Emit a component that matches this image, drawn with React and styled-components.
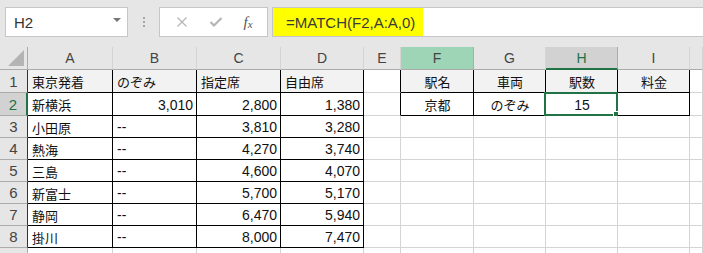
import React from 'react';
import styled, { createGlobalStyle } from 'styled-components';

const GRID = '#d4d4d4';
const GREEN = '#217346';

const GlobalStyle = createGlobalStyle`
  html, body {
    margin: 0;
    padding: 0;
    background: #e6e6e6;
  }
  body {
    font-family: "Liberation Sans", "Noto Sans CJK JP", sans-serif;
    overflow: hidden;
  }
`;

const Window = styled.div`
  width: 703px;
  height: 253px;
  overflow: hidden;
  background: #e6e6e6;
`;

const FormulaBar = styled.div`
  display: flex;
  align-items: stretch;
  height: 30px;
  padding: 7px 0 10px 5px;
`;

const NameBox = styled.div`
  width: 123px;
  box-sizing: border-box;
  background: #fff;
  border: 1px solid #c6c6c6;
  display: flex;
  align-items: center;
  justify-content: space-between;
  padding: 0 6px 0 8px;
  font-size: 15px;
  color: #333;
`;

const Caret = styled.span`
  width: 0;
  height: 0;
  border-left: 4px solid transparent;
  border-right: 4px solid transparent;
  border-top: 4px solid #777;
  margin-top: -4px;
`;

const Grip = styled.div`
  width: 31px;
  display: flex;
  flex-direction: column;
  align-items: center;
  justify-content: center;
  gap: 2px;
  & span {
    width: 2px;
    height: 2px;
    background: #a6a6a6;
  }
`;

const ButtonBox = styled.div`
  width: 109px;
  box-sizing: border-box;
  background: #fff;
  border: 1px solid #c6c6c6;
  display: flex;
  align-items: center;
  justify-content: space-around;
  padding: 0 4px 0 6px;
  margin-right: 4px;
`;

const Fx = styled.span`
  font-family: "Liberation Serif", serif;
  font-style: italic;
  font-size: 15px;
  color: #555;
  & sub {
    font-size: 11px;
    vertical-align: -1px;
  }
`;

const FormulaInput = styled.div`
  flex: 1;
  background: #fff;
  border: 1px solid #c6c6c6;
  border-right: none;
  display: flex;
  align-items: stretch;
`;

const Highlight = styled.span`
  background: #ffff00;
  display: flex;
  align-items: center;
  padding: 0 8px 0 13px;
  font-size: 15px;
  color: #3a3a3a;
`;

const Sheet = styled.div`
  display: grid;
  grid-template-columns: 28px 85px 84px 84px 83px 37px 73px 72px 72px 72px 1fr;
  grid-template-rows: 23px 23px 23px repeat(7, 22px);
  background: #fff;
`;

const Corner = styled.div`
  background: #e6e6e6;
  border-right: 1px solid #ababab;
  border-bottom: 1px solid #ababab;
  position: relative;
  &::after {
    content: "";
    position: absolute;
    right: 3px;
    bottom: 3px;
    width: 16px;
    height: 16px;
    background: #b4b4b4;
    clip-path: polygon(100% 0, 100% 100%, 0 100%);
  }
`;

const ColHead = styled.div`
  box-sizing: border-box;
  display: flex;
  align-items: center;
  justify-content: center;
  font-size: 14px;
  color: ${({ $active }) => ($active ? GREEN : '#444')};
  background: ${({ $tone }) =>
    $tone === 'ref' ? '#9fd5b7' : $tone === 'sel' ? '#d2d2d2' : '#e6e6e6'};
  border-right: 1px solid ${({ $tone }) => ($tone ? '#ababab' : '#d4d4d4')};
  border-bottom: ${({ $active }) =>
    $active ? `2px solid ${GREEN}` : '1px solid #ababab'};
`;

const RowHead = styled.div`
  box-sizing: border-box;
  display: flex;
  align-items: center;
  justify-content: center;
  font-size: 15px;
  color: ${({ $active }) => ($active ? GREEN : '#444')};
  background: ${({ $active }) => ($active ? '#d2d2d2' : '#e6e6e6')};
  border-bottom: 1px solid #ababab;
  border-right: ${({ $active, $edge }) =>
    $active ? `2px solid ${GREEN}` : `1px solid ${$edge ? '#333' : '#ababab'}`};
`;

const Cell = styled.div`
  position: relative;
  box-sizing: border-box;
  display: flex;
  align-items: center;
  justify-content: ${({ $align }) =>
    $align === 'right' ? 'flex-end' : $align === 'center' ? 'center' : 'flex-start'};
  padding: 1px 3px 0 4px;
  font-family: "Liberation Sans", "Noto Sans CJK JP", sans-serif;
  font-size: ${({ $num }) => ($num ? '14px' : '13px')};
  color: #111;
  white-space: nowrap;
  background: ${({ $fill }) => $fill || '#fff'};
  border-right: 1px solid ${({ $right }) => ($right ? '#000' : GRID)};
  border-bottom: 1px solid ${({ $bottom }) => ($bottom ? '#000' : GRID)};
`;

const Selection = styled.div`
  position: absolute;
  left: -2px;
  top: -1px;
  right: -1px;
  bottom: -1px;
  border: 2px solid ${GREEN};
  pointer-events: none;
`;

const FillHandle = styled.div`
  position: absolute;
  right: -4px;
  bottom: -4px;
  width: 5px;
  height: 5px;
  background: ${GREEN};
  border: 1px solid #fff;
`;

const columns = ['A', 'B', 'C', 'D', 'E', 'F', 'G', 'H', 'I', ''];

const rows = [
  ['東京発着', 'のぞみ', '指定席', '自由席', '', '駅名', '車両', '駅数', '料金', ''],
  ['新横浜', '3,010', '2,800', '1,380', '', '京都', 'のぞみ', '15', '', ''],
  ['小田原', '--', '3,810', '3,280'],
  ['熱海', '--', '4,270', '3,740'],
  ['三島', '--', '4,600', '4,070'],
  ['新富士', '--', '5,700', '5,170'],
  ['静岡', '--', '6,470', '5,940'],
  ['掛川', '--', '8,000', '7,470'],
  []
];

const isNumber = (v) => /^[\d,-]+$/.test(v);

function cellProps (r, c, value) {
  const inLeft = c <= 3 && r <= 7;
  const inRight = c >= 5 && c <= 8 && r <= 1;
  const props = { $num: isNumber(value) };
  if (inLeft) {
    props.$right = true;
    props.$bottom = true;
    props.$align = /^[\d,]+$/.test(value) && r > 0 ? 'right' : 'left';
  }
  if (inRight) {
    props.$right = true;
    props.$bottom = true;
    props.$align = 'center';
  }
  if (c === 4 && r <= 1) props.$right = true;
  if (r === 0 && (inLeft || inRight)) props.$fill = '#f2f2f2';
  return props;
}

const XIcon = () => (
  <svg width="12" height="12" viewBox="0 0 12 12">
    <path d="M1.5 1.5 L10.5 10.5 M10.5 1.5 L1.5 10.5" stroke="#b5b5b5" strokeWidth="1.3" fill="none" />
  </svg>
);

const CheckIcon = () => (
  <svg width="14" height="12" viewBox="0 0 14 12">
    <path d="M1.5 6 L5 9.5 L12.5 2" stroke="#b5b5b5" strokeWidth="2.2" fill="none" />
  </svg>
);

export default function App () {
  return (
    <Window>
      <GlobalStyle />
      <FormulaBar>
        <NameBox>
          H2
          <Caret />
        </NameBox>
        <Grip>
          <span />
          <span />
          <span />
        </Grip>
        <ButtonBox>
          <XIcon />
          <CheckIcon />
          <Fx>f<sub>x</sub></Fx>
        </ButtonBox>
        <FormulaInput>
          <Highlight>=MATCH(F2,A:A,0)</Highlight>
        </FormulaInput>
      </FormulaBar>
      <Sheet>
        <Corner />
        {columns.map((col, i) => (
          <ColHead
            key={`h${i}`}
            $tone={col === 'F' ? 'ref' : col === 'H' ? 'sel' : undefined}
            $active={col === 'H'}
          >
            {col}
          </ColHead>
        ))}
        {rows.map((row, r) => (
          <React.Fragment key={`r${r}`}>
            <RowHead $active={r === 1} $edge={r <= 7}>{r + 1}</RowHead>
            {columns.map((col, c) => {
              const value = row[c] || '';
              const selected = r === 1 && col === 'H';
              return (
                <Cell key={`c${r}-${c}`} {...cellProps(r, c, value)}>
                  {value}
                  {selected && (
                    <Selection>
                      <FillHandle />
                    </Selection>
                  )}
                </Cell>
              );
            })}
          </React.Fragment>
        ))}
      </Sheet>
    </Window>
  );
}
